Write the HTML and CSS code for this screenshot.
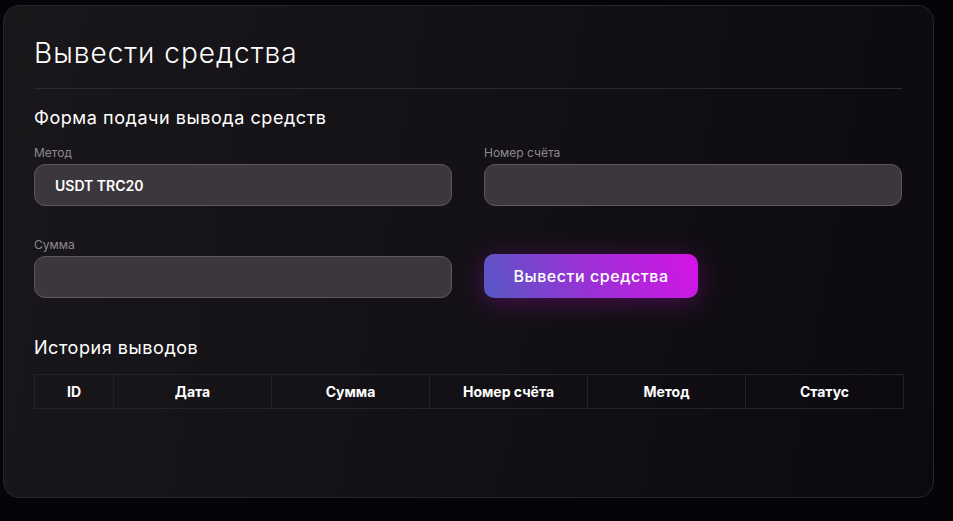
FILE: index.html
```html
<!DOCTYPE html>
<html lang="ru">
<head>
<meta charset="utf-8">
<link rel="stylesheet" href="styles.css">
</head>
<body>
<div class="page">
  <section class="card">
    <h1 class="title">Вывести средства</h1>
    <h2 class="subtitle">Форма подачи вывода средств</h2>
    <div class="form">
      <div class="field">
        <label class="label">Метод</label>
        <div class="input">USDT TRC20</div>
      </div>
      <div class="field">
        <label class="label">Номер счёта</label>
        <div class="input"></div>
      </div>
      <div class="field">
        <label class="label">Сумма</label>
        <div class="input"></div>
      </div>
      <div class="field field-btn">
        <button class="btn">Вывести средства</button>
      </div>
    </div>
    <h2 class="subtitle history">История выводов</h2>
    <table class="table">
      <thead>
        <tr>
          <th class="c-id">ID</th>
          <th>Дата</th>
          <th>Сумма</th>
          <th>Номер счёта</th>
          <th>Метод</th>
          <th>Статус</th>
        </tr>
      </thead>
    </table>
  </section>
</div>
</body>
</html>
```

FILE: styles.css
```css
* { box-sizing: border-box; }
html, body { margin: 0; padding: 0; }
body {
  background: #070409;
  font-family: Inter, "Noto Sans", "Open Sans", sans-serif;
  color: #fff;
  width: 953px;
  height: 521px;
  overflow: hidden;
}
.page {
  padding: 5px 20px 23px 3px;
}
.card {
  width: 931px;
  height: 493px;
  border: 1px solid #28242c;
  border-radius: 16px;
  background: linear-gradient(100deg, #1a171b 0%, #141116 50%, #0d0a0f 100%);
  padding: 30px 31px 30px 30px;
}
.title {
  margin: 0;
  font-size: 28px;
  line-height: 34px;
  font-weight: 300;
  letter-spacing: 1px;
  padding-bottom: 18px;
  border-bottom: 1px solid #2c282f;
}
.subtitle {
  margin: 18px 0 0;
  font-size: 18px;
  line-height: 22px;
  font-weight: 400;
  letter-spacing: 0.55px;
}
.form {
  margin-top: 16px;
  display: grid;
  grid-template-columns: 418px 418px;
  column-gap: 32px;
  row-gap: 31px;
}
.field {
  display: flex;
  flex-direction: column;
}
.field-btn {
  justify-content: flex-end;
}
.label {
  font-size: 12px;
  line-height: 16px;
  color: #8c8890;
  margin-bottom: 3px;
}
.input {
  height: 42px;
  border: 1px solid #5c585f;
  border-radius: 11px;
  background: #3b373d;
  padding: 0 20px;
  display: flex;
  align-items: center;
  font-size: 14px;
  font-weight: 600;
  color: #fff;
}
.btn {
  width: 214px;
  height: 44px;
  border: none;
  border-radius: 10px;
  background: linear-gradient(70deg, #5659c4 0%, #9d2fd6 50%, #d514e6 100%);
  color: #fff;
  font-family: inherit;
  font-size: 16px;
  font-weight: 500;
  letter-spacing: 0.55px;
  box-shadow: 0 4px 26px rgba(190, 20, 210, 0.32);
}
.history {
  margin-top: 39px;
}
.table {
  margin-top: 15px;
  width: 868px;
  border-collapse: collapse;
  table-layout: fixed;
}
.table th {
  border: 1px solid #26222a;
  height: 34px;
  font-size: 14px;
  font-weight: 700;
  text-align: center;
  width: 158px;
}
.table th.c-id { width: 79px; }
```
